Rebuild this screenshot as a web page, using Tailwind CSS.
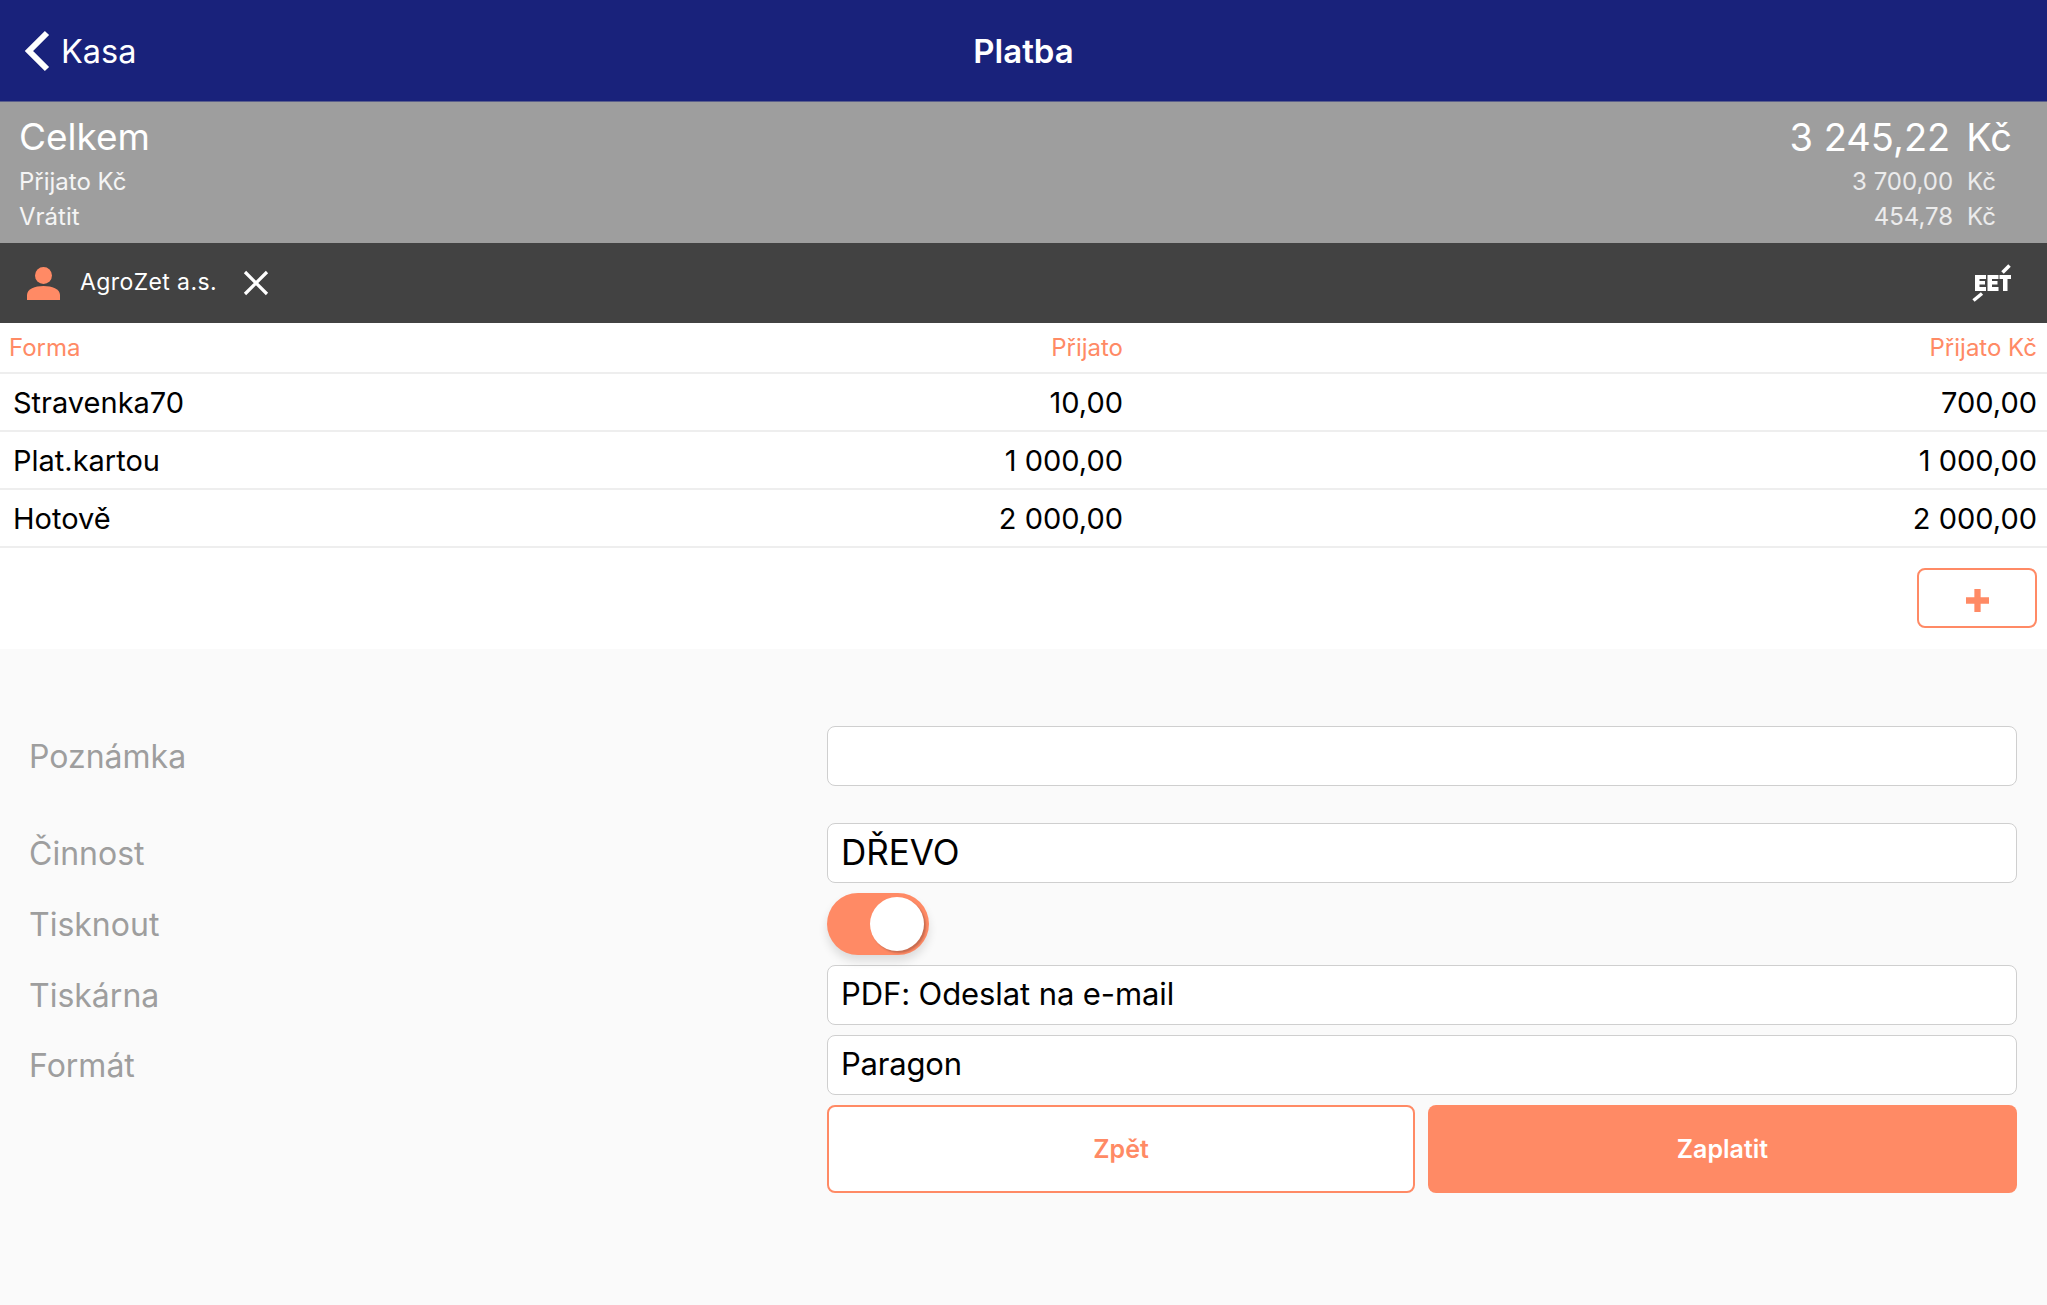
<!DOCTYPE html>
<html lang="cs"><head><meta charset="utf-8"><script src="https://cdn.jsdelivr.net/npm/@tailwindcss/browser@4"></script></head>
<body class="bg-[#fafafa]">
<div class="w-[2047px] h-[1305px] overflow-hidden bg-[#fafafa] font-['Inter',sans-serif] flex flex-col">
  <header class="relative h-[102px] shrink-0 bg-[#19227b] border-b border-[#5a5f8c] flex items-center text-white">
    <div class="flex items-center pl-[24px]">
      <svg width="26" height="42" viewBox="0 0 26 42" fill="none" stroke="white" stroke-width="6"><path d="M23 3 L5 21 L23 39"/></svg>
      <span class="ml-[11px] text-[32.500px] leading-none pt-[3px]">Kasa</span>
    </div>
    <div class="absolute inset-x-0 text-center text-[33px] font-semibold leading-none pt-[2px]">Platba</div>
  </header>
  <section class="h-[141px] shrink-0 bg-[#9e9e9e] text-white flex justify-between pl-[19px] pr-[35px] pt-[13px]">
    <div class="flex flex-col">
      <span class="text-[37px] leading-[44px]">Celkem</span>
      <span class="text-[24px] leading-[35px] mt-[5px] text-white/90">Přijato Kč</span>
      <span class="text-[24px] leading-[35px] text-white/90">Vrátit</span>
    </div>
    <div class="flex flex-col items-end">
      <span class="text-[38px] leading-[44px] flex gap-[16px]"><span>3 245,22</span><span>Kč</span></span>
      <span class="text-[24px] leading-[35px] mt-[5px] pr-[16px] flex gap-[14px] text-white/80"><span>3 700,00</span><span>Kč</span></span>
      <span class="text-[24px] leading-[35px] pr-[16px] flex gap-[14px] text-white/80"><span>454,78</span><span>Kč</span></span>
    </div>
  </section>
  <section class="h-[80px] shrink-0 bg-[#424242] text-white flex items-center justify-between pl-[27px] pr-[35px]">
    <div class="flex items-center">
      <svg width="33" height="33" viewBox="0 0 33 33" fill="#ff8a65"><circle cx="16.5" cy="8.5" r="8.5"/><path d="M0 33 V28 C0 22 8 19 16.500 19 S33 22 33 28 V33 Z"/></svg>
      <span class="ml-[20px] text-[23px] tracking-[0.4px] pb-[1px]">AgroZet a.s.</span>
      <svg class="ml-[26px]" width="26" height="26" viewBox="0 0 26 26" stroke="white" stroke-width="3.2"><path d="M2 2 L24 24 M24 2 L2 24"/></svg>
    </div>
    <svg width="40" height="40" viewBox="0 0 40 40" fill="white"><path d="M3 12h11v4H7.500v2H13v3.500H7.500V24H14v4H3z M15.500 12h11v4H20v2h5.500v3.500H20V24h6.500v4h-11z M27.500 12H39v4h-3.500v12H31V16h-3.500z"/><path d="M30.500 9.500 L37.500 2.500" stroke="white" stroke-width="3.500" fill="none"/><path d="M1.500 37.500 L10 30.500" stroke="white" stroke-width="3.500" fill="none"/></svg>
  </section>
  <section class="h-[326px] shrink-0 bg-white">
    <div class="h-[51px] grid grid-cols-[1114px_1fr] items-center border-b-2 border-[#eeeeee] pl-[9px] pr-[10px] text-[24px] text-[#ff8a65]">
      <div class="flex justify-between"><span>Forma</span><span>Přijato</span></div>
      <div class="text-right">Přijato Kč</div>
    </div>
    <div class="h-[58px] pt-[2px] grid grid-cols-[1110px_1fr] items-center border-b-2 border-[#eeeeee] pl-[13px] pr-[10px] text-[29px] text-black"><div class="flex justify-between"><span>Stravenka70</span><span>10,00</span></div><div class="text-right">700,00</div></div>
    <div class="h-[58px] pt-[2px] grid grid-cols-[1110px_1fr] items-center border-b-2 border-[#eeeeee] pl-[13px] pr-[10px] text-[29px] text-black"><div class="flex justify-between"><span>Plat.kartou</span><span>1 000,00</span></div><div class="text-right">1 000,00</div></div>
    <div class="h-[58px] pt-[2px] grid grid-cols-[1110px_1fr] items-center border-b-2 border-[#eeeeee] pl-[13px] pr-[10px] text-[29px] text-black"><div class="flex justify-between"><span>Hotově</span><span>2 000,00</span></div><div class="text-right">2 000,00</div></div>
    <div class="flex justify-end pt-[20px] pr-[10px]">
      <button class="w-[120px] h-[60px] rounded-[8px] border-2 border-[#ff8a65] bg-white flex items-center justify-center pt-[4px]">
        <svg width="23" height="23" viewBox="0 0 22 22" fill="#ff8a65"><path d="M8 0h6v8h8v6h-8v8H8v-8H0V8h8z"/></svg>
      </button>
    </div>
  </section>
  <section class="grid grid-cols-[827px_1190px] pt-[77px] text-[32px] text-[#9e9e9e]">
    <div class="h-[60px] pl-[29px] pt-[2px] flex items-center">Poznámka</div>
    <div class="h-[60px] rounded-[8px] border border-[#cfcfcf] bg-white"></div>
    <div class="h-[60px] mt-[37px] pl-[29px] pt-[2px] flex items-center">Činnost</div>
    <div class="h-[60px] mt-[37px] rounded-[8px] border border-[#cfcfcf] bg-white flex items-center pl-[13px] pb-[2px] text-[35px] text-black">DŘEVO</div>
    <div class="h-[62px] mt-[10px] pl-[29px] pt-[2px] flex items-center">Tisknout</div>
    <div class="h-[62px] mt-[10px] flex items-center">
      <div class="relative w-[102px] h-[62px] rounded-full bg-[#ff8a65] shadow-[0_6px_10px_rgba(0,0,0,0.12)]">
        <div class="absolute left-[43px] top-[4px] w-[54px] h-[54px] rounded-full bg-white shadow-[2px_2px_2px_rgba(0,0,0,0.22)]"></div>
      </div>
    </div>
    <div class="h-[60px] mt-[10px] pl-[29px] pt-[2px] flex items-center">Tiskárna</div>
    <div class="h-[60px] mt-[10px] rounded-[8px] border border-[#cfcfcf] bg-white flex items-center pl-[13px] pb-[2px] text-[31px] tracking-[-0.1px] text-black">PDF: Odeslat na e-mail</div>
    <div class="h-[60px] mt-[10px] pl-[29px] pt-[2px] flex items-center">Formát</div>
    <div class="h-[60px] mt-[10px] rounded-[8px] border border-[#cfcfcf] bg-white flex items-center pl-[13px] pb-[2px] text-[31px] tracking-[-0.2px] text-black">Paragon</div>
    <div></div>
    <div class="mt-[10px] grid grid-cols-[588px_589px] gap-[13px] h-[88px] text-[25px] font-semibold">
      <button class="rounded-[8px] border-2 border-[#ff8a65] bg-white text-[#ff8a65] pt-[2px]">Zpět</button>
      <button class="rounded-[8px] bg-[#ff8a65] text-white pt-[2px]">Zaplatit</button>
    </div>
  </section>
</div>
</body></html>
